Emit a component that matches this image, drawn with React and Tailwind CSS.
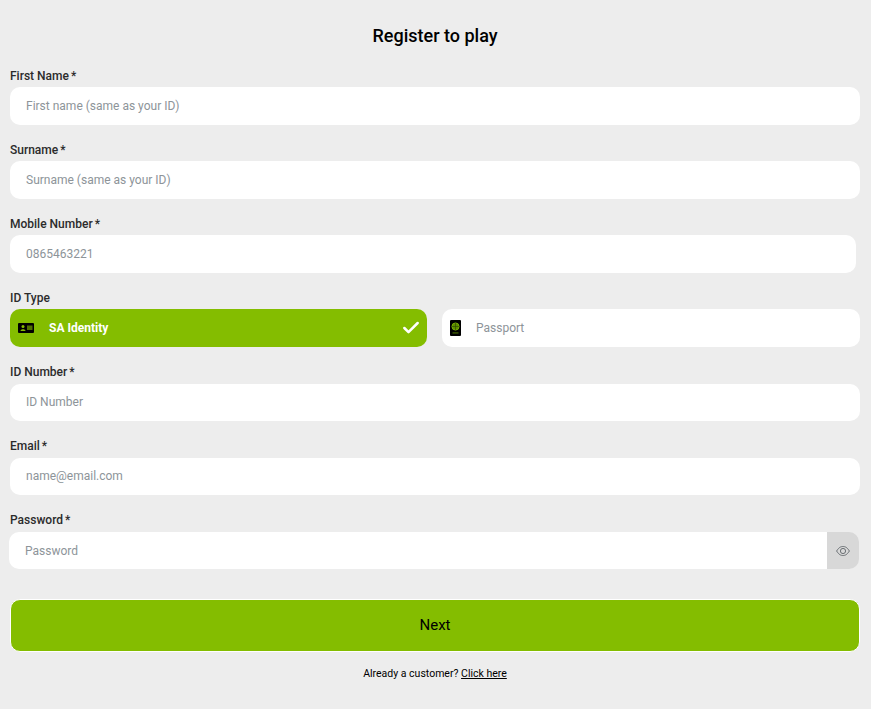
import React, { useState } from 'react';
import { Check } from 'lucide-react';

const inputClass =
  'h-full w-full rounded-[10px] bg-white px-4 text-[12px] text-[#333] placeholder:text-[#8d9499] focus:outline-none';

function Label({ children, required }) {
  return (
    <label className="block h-[16px] text-[12px] leading-[16px] font-medium text-[#2b2b2b]">
      {children}
      {required && <span className="ml-[2px]">*</span>}
    </label>
  );
}

function IdCardIcon() {
  return (
    <svg width="16" height="10" viewBox="0 0 16 10">
      <rect width="16" height="10" rx="1" fill="#000" />
      <circle cx="5" cy="3.5" r="1.5" fill="#84bd00" />
      <path d="M2.5 8 C2.5 5.8 7.5 5.8 7.5 8 Z" fill="#84bd00" />
      <rect x="9" y="2.5" width="5.5" height="4.5" fill="#4f7000" />
    </svg>
  );
}

function PassportIcon() {
  return (
    <svg width="11" height="16" viewBox="0 0 11 16">
      <rect width="11" height="16" rx="1" fill="#000" />
      <circle cx="5.5" cy="6.5" r="3.6" fill="#5c8a00" stroke="#84bd00" strokeWidth="0.8" />
      <path d="M1.9 6.5 H9.1 M5.5 2.9 V10.1" stroke="#2c4400" strokeWidth="0.6" />
      <rect x="2.5" y="12.5" width="6" height="0.9" fill="#5c8a00" />
    </svg>
  );
}

function EyeIcon() {
  return (
    <svg width="14" height="10" viewBox="0 0 14 10" fill="none" stroke="#6b7074" strokeWidth="1">
      <path d="M0.6 5 C3 1.2 5 0.5 7 0.5 C9 0.5 11 1.2 13.4 5 C11 8.8 9 9.5 7 9.5 C5 9.5 3 8.8 0.6 5 Z" />
      <circle cx="7" cy="5" r="2.6" />
    </svg>
  );
}

export default function App() {
  const [idType, setIdType] = useState('identity');

  return (
    <div className="min-h-[709px] bg-[#ededed] pt-[25px] pr-[11px] pl-[10px] font-['Roboto',sans-serif]">
      <h1 className="mb-[21px] h-[22px] text-center text-[18px] leading-[22px] font-medium text-black">
        Register to play
      </h1>

      <div>
        <Label required>First Name</Label>
        <div className="mt-[3px] h-[38px]">
          <input className={inputClass} placeholder="First name (same as your ID)" />
        </div>
      </div>

      <div className="mt-[17px]">
        <Label required>Surname</Label>
        <div className="mt-[3px] h-[38px]">
          <input className={inputClass} placeholder="Surname (same as your ID)" />
        </div>
      </div>

      <div className="mt-[17px]">
        <Label required>Mobile Number</Label>
        <div className="mt-[3px] h-[38px] pr-[4px]">
          <input className={inputClass} placeholder="0865463221" />
        </div>
      </div>

      <div className="mt-[17px]">
        <Label>ID Type</Label>
        <div className="mt-[3px] flex h-[38px] gap-[15px]">
          <button
            type="button"
            onClick={() => setIdType('identity')}
            className="flex w-[417px] items-center rounded-[10px] bg-[#84bd00] pr-[6px] pl-[8px] text-[12px] font-bold text-white"
          >
            <IdCardIcon />
            <span className="ml-[15px] flex-1 text-left">SA Identity</span>
            {idType === 'identity' && <Check size={20} strokeWidth={3} />}
          </button>
          <button
            type="button"
            onClick={() => setIdType('passport')}
            className="flex flex-1 items-center rounded-[10px] bg-white pl-[8px] text-[12px] text-[#8d9499]"
          >
            <PassportIcon />
            <span className="ml-[15px]">Passport</span>
          </button>
        </div>
      </div>

      <div className="mt-[17px]">
        <Label required>ID Number</Label>
        <div className="mt-[4px] h-[37px]">
          <input className={`${inputClass} pb-[1px]`} placeholder="ID Number" />
        </div>
      </div>

      <div className="mt-[17px]">
        <Label required>Email</Label>
        <div className="mt-[4px] h-[37px]">
          <input className={`${inputClass} pb-[1px]`} placeholder="name@email.com" />
        </div>
      </div>

      <div className="mt-[17px]">
        <Label required>Password</Label>
        <div className="mt-[4px] -ml-px flex h-[37px] pr-px">
          <input
            type="password"
            className="h-full flex-1 rounded-l-[10px] bg-white px-4 text-[12px] placeholder:text-[#8d9499] focus:outline-none"
            placeholder="Password"
          />
          <div className="flex w-[32px] items-center justify-center rounded-r-[10px] bg-[#d8d8d8]">
            <EyeIcon />
          </div>
        </div>
      </div>

      <button
        type="button"
        className="mt-[30px] block h-[53px] w-full rounded-[10px] border border-white bg-[#84bd00] text-[15px] text-black"
      >
        Next
      </button>

      <p className="mt-[14px] text-center text-[10.5px] leading-[16px] text-black">
        Already a customer? <a className="underline">Click here</a>
      </p>
    </div>
  );
}
